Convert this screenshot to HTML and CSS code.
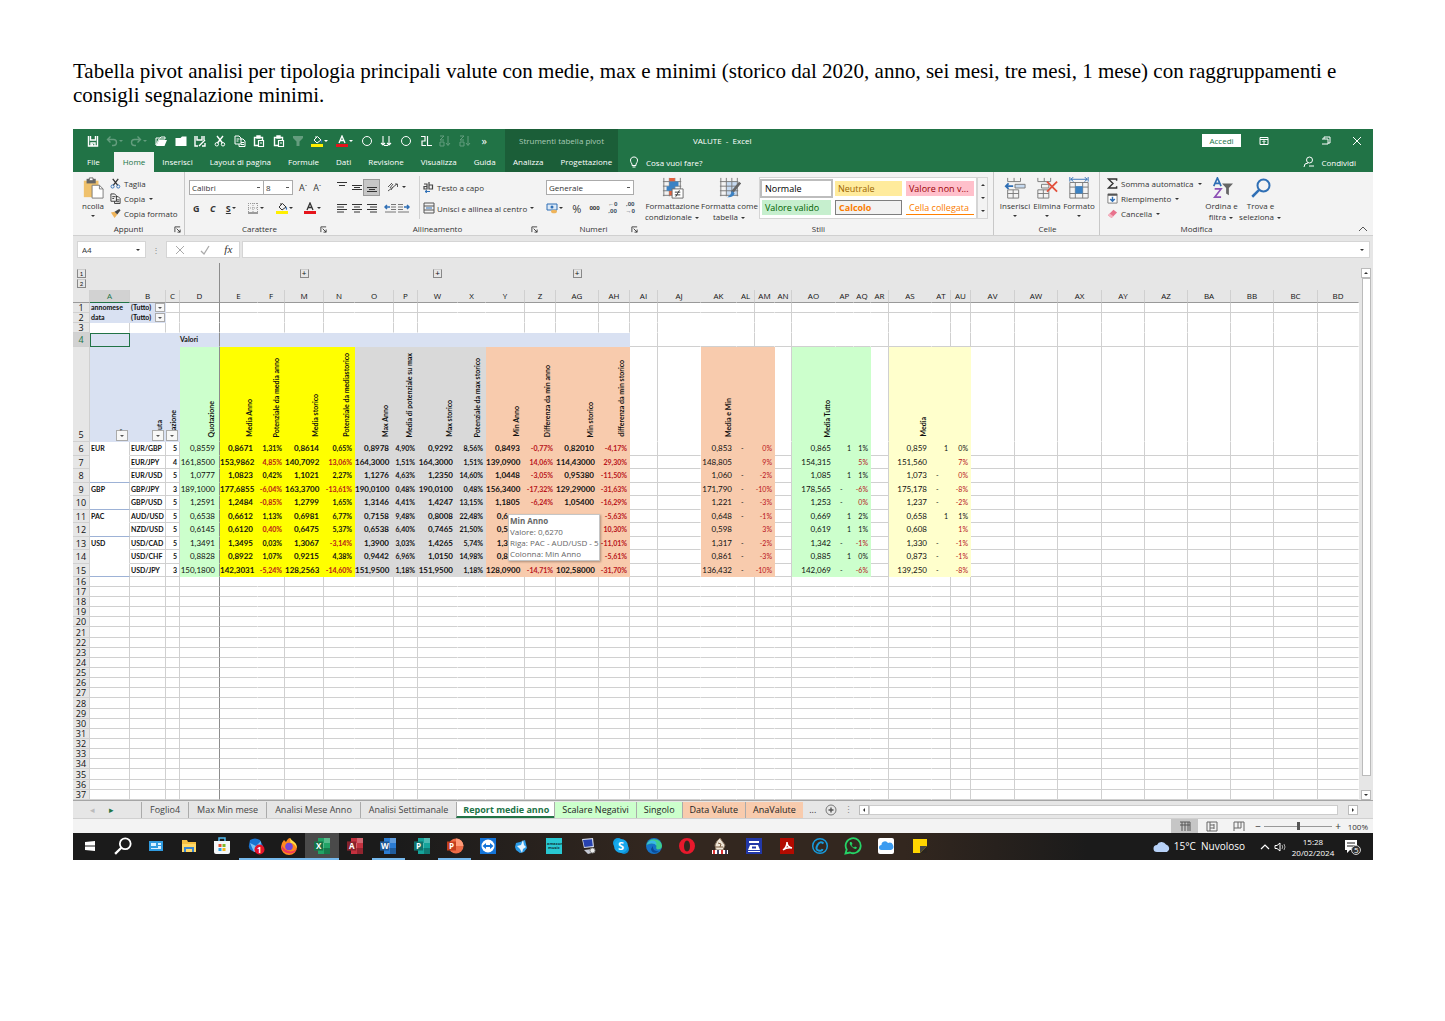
FILE: index.html
```html
<!DOCTYPE html>
<html lang="it">
<head>
    <meta charset="UTF-8">
    <meta name="viewport" content="width=device-width, initial-scale=1.0">
    <title>Tabella pivot valute</title>
    <link rel="stylesheet" href="styles.css">
</head>
<body>
    <!-- Shared icons -->
    <svg class="sprite" aria-hidden="true">
        <symbol id="save" viewBox="0 0 12 12"><path d="M1.5 1v10h9V1M3.5 1v4h5V1M4 11V8h4v3M5.5 9v2" fill="none" stroke="currentColor" stroke-width="1.4"/></symbol>
        <symbol id="undo" viewBox="0 0 12 12"><path d="M4.5 1.5L1.5 4.5l3 3M2 4.500h5.500a3 3 0 0 1 0 6H6" fill="none" stroke="currentColor" stroke-width="1.4"/></symbol>
        <symbol id="redo" viewBox="0 0 12 12"><path d="M7.500 1.500l3 3-3 3M10 4.500H4.500a3 3 0 0 0 0 6H6" fill="none" stroke="currentColor" stroke-width="1.400"/></symbol>
        <symbol id="open" viewBox="0 0 12 12"><path d="M1 10V3h4l1-1h4v2H4L1 10z" fill="none" stroke="currentColor"/><path d="M4 5h8l-2.500 6H1z" fill="currentColor"/></symbol>
        <symbol id="folder" viewBox="0 0 12 12"><path d="M0.500 3h5L7 1.500h4.500V11h-11z" fill="currentColor"/></symbol>
        <symbol id="cut" viewBox="0 0 12 12"><path d="M3 1l5.500 7M9 1L3.500 8" fill="none" stroke="currentColor" stroke-width="1.400"/><circle cx="2.800" cy="9.300" r="1.700" fill="none" class="loop"/><circle cx="9" cy="9.300" r="1.700" fill="none" class="loop"/></symbol>
        <symbol id="copy" viewBox="0 0 12 12"><path d="M1 1h4l2 2v6H1zM6 4h3l2 2v5.500H5V9M2.500 4h3M2.500 6h2M7 7.500h3M7 9.500h3" fill="none" stroke="currentColor"/></symbol>
        <symbol id="clip" viewBox="0 0 12 12"><path d="M5 10.500H1.500v-8h8V5M4 3V1h3v2z" fill="none" stroke="currentColor" stroke-width="1.400"/><path d="M5.500 5.500h5v6h-5zM7 8h2" fill="none" stroke="currentColor" stroke-width="1.200"/></symbol>
        <symbol id="funnel" viewBox="0 0 12 12"><path d="M1 1h10v2L7.500 6.500V11h-3V6.500L1 3z" fill="currentColor"/></symbol>
        <symbol id="fill" viewBox="0 0 12 12"><path d="M3 5l3.500-3.500L10 5 6 8zM5 3V1" fill="none" stroke="currentColor"/><path d="M10 4.500q2 2 .5 3.500-1.200-1-.5-3.500" fill="#2f6fb5"/><path d="M0 9h12v3H0z" fill="#ffef00"/></symbol>
        <symbol id="fontcolor" viewBox="0 0 12 12"><path d="M3 8l3-7 3 7M4 5.500h4" fill="none" stroke="currentColor" stroke-width="1.300"/><path d="M0 9h12v3H0z" fill="#e5141b"/></symbol>
        <symbol id="ring" viewBox="0 0 12 12"><circle cx="6" cy="6" r="4.500" fill="none" stroke="currentColor"/></symbol>
        <symbol id="downs" viewBox="0 0 12 12"><path d="M3 1v9M1 8l2 2 2-2M9 1v9M7 8l2 2 2-2M4 10.500h4" fill="none" stroke="currentColor" stroke-width="1.100"/></symbol>
        <symbol id="loops" viewBox="0 0 12 12"><path d="M1 1.500h4V6H2v4.500h4M7.500 1v9.500H12" fill="none" stroke="currentColor" stroke-width="1.200"/></symbol>
        <symbol id="sort" viewBox="0 0 12 12"><path d="M1 1h4L1 5h4M1 7h4v4H1zM9 1v9M7 8l2 2.500L11 8" fill="none" stroke="currentColor"/></symbol>
        <symbol id="lines" viewBox="0 0 12 12"><path d="M1 2.500h10M3 5h6M1 7.500h10M3 10h6" stroke="currentColor"/></symbol>
        <symbol id="left" viewBox="0 0 12 12"><path d="M1 2.500h10M1 5h7M1 7.500h10M1 10h7" stroke="currentColor"/></symbol>
        <symbol id="right" viewBox="0 0 12 12"><path d="M1 2.500h10M4 5h7M1 7.500h10M4 10h7" stroke="currentColor"/></symbol>
        <symbol id="vtop" viewBox="0 0 12 12"><path d="M1 1.500h10M3 4.500h6" stroke="currentColor"/></symbol>
        <symbol id="vmid" viewBox="0 0 12 12"><path d="M1 4.500h10M3 6.500h6M1 8.500h10" stroke="currentColor"/></symbol>
        <symbol id="vbot" viewBox="0 0 12 12"><path d="M3 8.500h6M1 10.500h10M1 6.500h10" stroke="currentColor"/></symbol>
        <symbol id="indent" viewBox="0 0 12 12"><path d="M7 2.500h5M7 5h5M7 7.500h5M1 10h11" stroke="#777"/><path d="M6 5H1M3 3L1 5l2 2" fill="none" stroke="#2f6fb5" stroke-width="1.500"/></symbol>
        <symbol id="borders" viewBox="0 0 12 12"><path d="M1.500 1v9M6 1v9M10.500 1v9M1 1.500h10M1 6h10" stroke="#999" stroke-dasharray="1 1"/><path d="M1 11h10" stroke="#444"/></symbol>
        <symbol id="grid" viewBox="0 0 24 24"><path d="M1 5h20M1 10h20M1 15h20M1 20h20M2 1v20M8 1v20M14 1v20M20 1v20" stroke="#777" fill="none"/></symbol>
        <symbol id="launch" viewBox="0 0 8 8"><path d="M1 7V1h6M3 3l4 4M7 4v3H4" fill="none" stroke="currentColor"/></symbol>
        <symbol id="lens" viewBox="0 0 16 16"><circle cx="10" cy="6" r="4.800" fill="none" stroke="currentColor" stroke-width="1.600"/><path d="M6.500 9.500L1 15" stroke="currentColor" stroke-width="2"/></symbol>
        <symbol id="office" viewBox="0 0 18 18"><path d="M5 1h12v16H5z" fill="currentColor"/><path d="M11 1h6v5h-6zM5 6h6v5H5z" fill="#fff" opacity=".25"/><path d="M11 11h6v6h-6z" opacity=".25"/><path d="M1 4.500h9v9H1z" fill="currentColor"/><path d="M1 4.500h9v9H1z" opacity=".3"/></symbol>
    </svg>

    <p class="intro">Tabella pivot analisi per tipologia principali valute con medie, max e minimi (storico dal 2020, anno, sei mesi, tre mesi, 1 mese) con raggruppamenti e consigli segnalazione minimi.</p>

    <main class="excel">
        <header class="top">
            <div class="top-left">
                <div class="quick">
                    <button aria-label="Salva"><svg><use href="#save"/></svg></button>
                    <button class="wide dim" aria-label="Annulla"><svg><use href="#undo"/></svg><i class="caret"></i></button>
                    <button class="wide dim" aria-label="Ripeti"><svg><use href="#redo"/></svg><i class="caret"></i></button>
                    <button aria-label="Apri"><svg><use href="#open"/></svg></button>
                    <button aria-label="Cartella"><svg><use href="#folder"/></svg></button>
                    <button aria-label="Salva con nome"><svg viewBox="0 0 12 12"><path d="M1 1v10h3M10 1v4M3 1v4h5V1M5 11l6-6M8 11h3V8" fill="none" stroke="currentColor" stroke-width="1.400"/></svg></button>
                    <button aria-label="Taglia"><svg><use href="#cut"/></svg></button>
                    <button aria-label="Copia"><svg><use href="#copy"/></svg></button>
                    <button aria-label="Incolla"><svg><use href="#clip"/></svg></button>
                    <button aria-label="Incolla valori"><svg><use href="#clip"/></svg></button>
                    <button class="dim" aria-label="Filtro"><svg><use href="#funnel"/></svg></button>
                    <button class="wide" aria-label="Riempimento"><svg><use href="#fill"/></svg><i class="caret"></i></button>
                    <button class="wide" aria-label="Colore carattere"><svg><use href="#fontcolor"/></svg><i class="caret"></i></button>
                    <button aria-label="Cerchio"><svg><use href="#ring"/></svg></button>
                    <button aria-label="Frecce"><svg><use href="#downs"/></svg></button>
                    <button aria-label="Aggiorna"><svg><use href="#ring"/></svg></button>
                    <button aria-label="Connessioni"><svg><use href="#loops"/></svg></button>
                    <button class="dim" aria-label="Ordina crescente"><svg><use href="#sort"/></svg></button>
                    <button class="dim" aria-label="Ordina decrescente"><svg><use href="#sort"/></svg></button>
                    <button class="others" aria-label="Altri comandi">»</button>
                </div>
                <nav class="tabs">
                    <a href="#" class="file">File</a>
                    <a href="#" class="active">Home</a>
                    <a href="#">Inserisci</a>
                    <a href="#">Layout di pagina</a>
                    <a href="#">Formule</a>
                    <a href="#">Dati</a>
                    <a href="#">Revisione</a>
                    <a href="#">Visualizza</a>
                    <a href="#">Guida</a>
                </nav>
            </div>
            <div class="top-context">
                <div class="context-title">Strumenti tabella pivot</div>
                <nav class="tabs"><a href="#">Analizza</a><a href="#">Progettazione</a></nav>
            </div>
            <div class="top-right">
                <div class="window-bar">
                    <span class="doc-title">VALUTE &nbsp;-&nbsp; Excel</span>
                    <button class="login">Accedi</button>
                    <button aria-label="Opzioni barra"><svg viewBox="0 0 12 12"><path d="M2 2.500h8v7H2zM2 4.500h8M6 9V6M4.500 7L6 5.500 7.500 7" fill="none" stroke="currentColor"/></svg></button>
                    <button class="restore" aria-label="Ripristina"><svg viewBox="0 0 12 12"><path d="M2 4h6v5H2M4 4V2h6v6H8" fill="none" stroke="currentColor"/></svg></button>
                    <button class="close" aria-label="Chiudi"><svg viewBox="0 0 12 12"><path d="M2 2l8 8M10 2l-8 8" stroke="currentColor"/></svg></button>
                </div>
                <div class="ask-bar">
                    <button><svg viewBox="0 0 12 12"><path d="M4 8C1 4 3 1 6 1s5 3 2 7v1.500H4zM4.500 11h3" fill="none" stroke="currentColor"/></svg> Cosa vuoi fare?</button>
                    <button><svg viewBox="0 0 12 12"><circle cx="6.500" cy="4" r="3" fill="none" stroke="currentColor"/><path d="M1 11q0-4 4-4M6 10h5" fill="none" stroke="currentColor"/></svg> Condividi</button>
                </div>
            </div>
        </header>

        <section class="ribbon">
            <div class="group clipboard line">
                <div class="body">
                    <button class="big">
                        <svg viewBox="0 0 24 24"><path d="M2 4h16v18H2z" fill="#efc16c"/><path d="M5 2h10v5H5z" fill="#666"/><path d="M8 1h4v3H8z" fill="#fff" stroke="#666"/><path d="M11 9h8l4 4v10H11z" fill="#fff" stroke="#777"/><path d="M19 9v4h4" fill="none" stroke="#777"/></svg>
                        ncolla<i class="caret"></i>
                    </button>
                    <div class="stack">
                        <button><svg><use href="#cut"/></svg>Taglia</button>
                        <button><svg><use href="#copy"/></svg>Copia <i class="caret"></i></button>
                        <button><svg viewBox="0 0 12 12"><path d="M1 5l4-1 3 3-3 4z" fill="#efb45a"/><path d="M5 4l5-3 1.500 1.500L8 7z" fill="#444"/></svg>Copia formato</button>
                    </div>
                </div>
                <div class="caption">Appunti<svg><use href="#launch"/></svg></div>
            </div>

            <div class="group font">
                <div class="body rows">
                    <div class="row">
                        <select class="family" aria-label="Carattere"><option>Calibri</option></select><select class="size" aria-label="Dimensione"><option>8</option></select>
                        <button class="letter">A<sup>ˆ</sup></button>
                        <button class="letter">A<sup>ˇ</sup></button>
                    </div>
                    <div class="row spread">
                        <button class="letter"><b>G</b></button>
                        <button class="letter"><b><em>C</em></b></button>
                        <button class="letter"><b><u>S</u></b> <i class="caret"></i></button>
                        <button><svg><use href="#borders"/></svg><i class="caret"></i></button>
                        <button><svg><use href="#fill"/></svg><i class="caret"></i></button>
                        <button><svg><use href="#fontcolor"/></svg><i class="caret"></i></button>
                    </div>
                </div>
                <div class="caption">Carattere<svg><use href="#launch"/></svg></div>
            </div>

            <div class="group align">
                <div class="body rows">
                    <div class="row">
                        <button class="tool" aria-label="In alto"><svg><use href="#vtop"/></svg></button>
                        <button class="tool" aria-label="Al centro"><svg><use href="#vmid"/></svg></button>
                        <button class="tool on" aria-label="In basso"><svg><use href="#vbot"/></svg></button>
                        <button class="tool wide-tool" aria-label="Orientamento"><svg viewBox="0 0 12 12"><path d="M1 10l9-7M8 3h2.500v3M1 6l4-4M3 7l3-4M4 9l2-3" fill="none" stroke="#555"/></svg><i class="caret"></i></button>
                        <button class="split"><svg viewBox="0 0 12 12"><path d="M1 3h3v5H1V5.500h3M6 1v7h3.500V4H6" fill="none" stroke="#444" stroke-width="1.200"/><path d="M2 10.500h5M4 9l-2 1.500L4 12" fill="none" stroke="#2f6fb5"/></svg>Testo a capo</button>
                    </div>
                    <div class="row">
                        <button class="tool" aria-label="A sinistra"><svg><use href="#left"/></svg></button>
                        <button class="tool" aria-label="Centra"><svg><use href="#lines"/></svg></button>
                        <button class="tool" aria-label="A destra"><svg><use href="#right"/></svg></button>
                        <button class="tool wide-tool" aria-label="Rientro"><svg><use href="#indent"/></svg><svg class="flip"><use href="#indent"/></svg></button>
                        <button class="split"><svg viewBox="0 0 12 12"><path d="M1 1h10v10H1zM1 4h10M1 8h10" fill="none" stroke="#555"/><path d="M3 6h6" stroke="#2f6fb5"/></svg>Unisci e allinea al centro <i class="caret"></i></button>
                    </div>
                </div>
                <div class="caption">Allineamento<svg><use href="#launch"/></svg></div>
            </div>

            <div class="group number">
                <div class="body rows">
                    <div class="row"><select class="format" aria-label="Formato numero"><option>Generale</option></select></div>
                    <div class="row spread">
                        <button aria-label="Valuta"><svg viewBox="0 0 12 12"><path d="M1 2h10v6H1z" fill="#dce9f6" stroke="#2f6fb5"/><circle cx="6" cy="5" r="1.500" fill="#2f6fb5"/><ellipse cx="8" cy="9.500" rx="3" ry="1.800" fill="#efb45a"/></svg><i class="caret"></i></button>
                        <button class="percent">%</button>
                        <button class="zeros">000</button>
                        <button class="dec">←0<br>,00</button>
                        <button class="dec">,00<br>→0</button>
                    </div>
                </div>
                <div class="caption">Numeri<svg><use href="#launch"/></svg></div>
            </div>

            <div class="group styles line">
                <div class="body">
                    <button class="big"><svg viewBox="0 0 24 24"><use href="#grid"/><path d="M8 1h6v4H8zM8 15h6v5H8z" fill="#e2603c"/><path d="M8 5h10v5H8zM5 10h9v5H5z" fill="#3b82c4"/><path d="M11 13h12v10H11z" fill="#fff" stroke="#666"/><path d="M14 16.500h6M14 19.500h6M19 14.500l-4 7" stroke="#333"/></svg>Formattazione<span>condizionale <i class="caret"></i></span></button>
                    <button class="big"><svg viewBox="0 0 24 24"><path d="M8 5h12v15H8z" fill="#c6daf0"/><use href="#grid"/><path d="M23 6l-9 11" stroke="#666" stroke-width="3"/><path d="M14 15l3 3q-2 5-8 4 4-2 5-7" fill="#3b82c4"/></svg>Formatta come<span>tabella <i class="caret"></i></span></button>
                    <div class="gallery">
                        <button class="normal">Normale</button>
                        <button class="neutral">Neutrale</button>
                        <button class="bad">Valore non v...</button>
                        <button class="good">Valore valido</button>
                        <button class="calc">Calcolo</button>
                        <button class="linked">Cella collegata</button>
                    </div>
                    <div class="gallery-nav"><i class="caret up"></i><i class="caret"></i><i class="caret"></i></div>
                </div>
                <div class="caption">Stili</div>
            </div>

            <div class="group cells line">
                <div class="body">
                    <button class="big"><svg viewBox="0 0 24 24"><path d="M4 1v4h14V1M11 1v4M4 14h12v9H4zM10 14v9M4 18h12" fill="none" stroke="#777"/><path d="M12 8h11v4H12z" fill="#c6daf0" stroke="#777"/><path d="M10 10H2M5 7l-3 3 3 3" fill="none" stroke="#2f6fb5" stroke-width="2"/></svg>Inserisci<i class="caret"></i></button>
                    <button class="big"><svg viewBox="0 0 24 24"><path d="M2 1v4h14V1M9 1v4M2 14h12v9H2zM8 14v9M2 18h12M6 8h8v4H6z" fill="none" stroke="#777"/><path d="M12 5l11 11M23 5L12 16" stroke="#e2503c" stroke-width="2"/></svg>Elimina<i class="caret"></i></button>
                    <button class="big"><svg viewBox="0 0 24 24"><path d="M2 6h20v17H2zM8 6v17M16 6v17M2 11h20M2 18h20" fill="none" stroke="#777"/><path d="M8 10h8v8H8z" fill="#3b82c4"/><path d="M2 0v5M22 0v5M3 2.500h18M6 0L3 2.500 6 5M18 0l3 2.500L18 5" fill="none" stroke="#2f6fb5"/></svg>Formato<i class="caret"></i></button>
                </div>
                <div class="caption">Celle</div>
            </div>

            <div class="group edit">
                <div class="body">
                    <div class="stack">
                        <button><svg viewBox="0 0 12 12"><path d="M10.500 3V1h-9l5 5-5 5h9V9" fill="none" stroke="#333" stroke-width="1.600"/></svg>Somma automatica <i class="caret"></i></button>
                        <button><svg viewBox="0 0 12 12"><path d="M1 1h10v10H1z" fill="#fff" stroke="#777"/><path d="M1 2h10" stroke="#555" stroke-width="2"/><path d="M6 4v5M3.500 6.500L6 9l2.500-2.500" fill="none" stroke="#2f6fb5" stroke-width="1.600"/></svg>Riempimento <i class="caret"></i></button>
                        <button><svg viewBox="0 0 12 12"><path d="M1 8l6-6 4 3-6 6z" fill="#e8728c"/><path d="M1 8l2-2 4 3-2 2z" fill="#f5b3c0"/></svg>Cancella <i class="caret"></i></button>
                    </div>
                    <button class="big"><svg viewBox="0 0 24 24"><path d="M3 10L7 1l4 9M4.500 7h5" fill="none" stroke="#2f6fb5" stroke-width="1.800"/><path d="M4 13h7l-7 9h7" fill="none" stroke="#8d4fb5" stroke-width="1.800"/><path d="M12 7h12l-4.500 5v8l-3-2v-6z" fill="#666"/></svg>Ordina e<span>filtra <i class="caret"></i></span></button>
                    <button class="big find"><svg><use href="#lens"/></svg>Trova e<span>seleziona <i class="caret"></i></span></button>
                </div>
                <div class="caption">Modifica</div>
            </div>
            <button class="collapse" aria-label="Comprimi"><svg viewBox="0 0 12 12"><path d="M2 8l4-4 4 4" fill="none" stroke="#555"/></svg></button>
        </section>

        <section class="formula">
            <div class="name"><input type="text" value="A4" aria-label="Casella nome"><i class="caret"></i></div>
            <span class="dots">⋮</span>
            <div class="fx">
                <svg viewBox="0 0 12 12"><path d="M2 2l8 8M10 2l-8 8" stroke="#aaa"/></svg>
                <svg viewBox="0 0 12 12"><path d="M2 7l3 3 5-8" fill="none" stroke="#aaa" stroke-width="1.300"/></svg>
                <em>fx</em>
            </div>
            <div class="entry"><input type="text" aria-label="Barra della formula"><i class="caret"></i></div>
        </section>

        <section class="sheet">
            <div class="sheet-view">
                <table id="grid-table"></table>
                <div class="tip"><b>Min Anno</b><br>Valore: 0,6270<br>Riga: PAC - AUD/USD - 5<br>Colonna: Min Anno</div>
            </div>
            <div class="vscroll">
                <button aria-label="Su"><i class="caret up"></i></button>
                <div class="thumb"></div>
                <button aria-label="Giù"><i class="caret"></i></button>
            </div>
        </section>

        <nav class="sheets">
            <div class="arrows"><span>◂</span><span class="next">▸</span></div>
            <a href="#">Foglio4</a>
            <a href="#">Max Min mese</a>
            <a href="#">Analisi Mese Anno</a>
            <a href="#">Analisi Settimanale</a>
            <a href="#" class="current">Report medie anno</a>
            <a href="#" class="green">Scalare Negativi</a>
            <a href="#" class="green">Singolo</a>
            <a href="#" class="orange">Data Valute</a>
            <a href="#" class="orange">AnaValute</a>
            <span class="more">...</span>
            <button class="add" aria-label="Nuovo foglio"><svg viewBox="0 0 12 12"><circle cx="6" cy="6" r="5" fill="none" stroke="#777"/><path d="M6 3.500v5M3.500 6h5" stroke="#555" stroke-width="1.400"/></svg></button>
            <span class="dots">⋮</span>
            <div class="hscroll"><button aria-label="Sinistra"><i class="caret west"></i></button><div class="thumb"></div><button aria-label="Destra"><i class="caret east"></i></button></div>
        </nav>

        <footer class="status">
            <button class="on" aria-label="Normale"><svg viewBox="0 0 12 12"><path d="M1 2h10M1 5h10M3 2v9M6 2v9M9 2v9M11 2v9" stroke="#555" fill="none"/></svg></button>
            <button aria-label="Layout di pagina"><svg viewBox="0 0 12 12"><path d="M1 2h10v9H1zM4 2v9M4 5h4M4 8h4M8 4v5" fill="none" stroke="#666"/></svg></button>
            <button aria-label="Anteprima interruzioni"><svg viewBox="0 0 12 12"><path d="M1 11V2h10v9M5 2v6H1M8 2v6H5" fill="none" stroke="#666"/></svg></button>
            <span>−</span>
            <input type="range" min="10" max="190" value="100" aria-label="Zoom">
            <span>+</span>
            <span class="zoom">100%</span>
        </footer>

        <div class="taskbar">
            <div class="apps">
                <a href="#" aria-label="Start"><svg viewBox="0 0 18 18"><path d="M4 5l10-1v10L4 13z" fill="#fff"/><path d="M4 9h10" stroke="#1c1c1c"/></svg></a>
                <a href="#" aria-label="Cerca" class="search"><svg><use href="#lens"/></svg></a>
                <a href="#" aria-label="Desktop"><svg viewBox="0 0 18 18"><path d="M2 4h14v10H2z" fill="#2f9be0"/><path d="M4 6h5v3H4zM11 6h3v2h-3zM11 9h3v2h-3zM4 11h10v1H4z" fill="#d8f0ff"/></svg></a>
                <a href="#" aria-label="Esplora file"><svg viewBox="0 0 18 18"><path d="M2 3h5l1 2h8v10H2z" fill="#f5c042"/><path d="M2 7h14v8H2z" fill="#ffd968"/><path d="M4 10h10v5h-2v-3H6v3H4z" fill="#3a86d0"/></svg></a>
                <a href="#" aria-label="Store"><svg viewBox="0 0 18 18"><path d="M6 4V1h6v3" fill="none" stroke="#4fb9ee" stroke-width="1.500"/><path d="M1 4h16v11q0 2-2 2H3q-2 0-2-2z" fill="#f4f8fa"/><path d="M5.500 7h3v3h-3z" fill="#e5502e"/><path d="M9.500 7h3v3h-3z" fill="#7db928"/><path d="M5.500 11h3v3h-3z" fill="#2ea3e5"/><path d="M9.500 11h3v3h-3z" fill="#f5b81e"/></svg></a>
                <a href="#" aria-label="Posta" class="run"><svg viewBox="0 0 18 18"><path d="M3 3q5-3 10 0l3 6q-2 6-8 6Q1 13 2 8z" fill="#1a73d0"/><path d="M3 6l6 3 5-5-1 9-6 2z" fill="#7cc4f5"/><circle cx="12.500" cy="12.500" r="5" fill="#e5142a"/><text x="10" y="15.500">1</text></svg></a>
                <a href="#" aria-label="Firefox" class="run"><svg viewBox="0 0 18 18"><path d="M2 6l2-3 2 2q2-4 4-4 1 2 4 4 3 2 3 5a7.500 7.500 0 0 1-16 0z" fill="#ff8a1c"/><path d="M10 1q1 2 4 4 3 2 2.500 6-2-5-6-5z" fill="#ffdf45"/><path d="M1.500 8q0 8 8 8.500 6 0 7-5-2 3-6 3-6-1-9-6.500" fill="#f2385c"/><circle cx="9" cy="9.500" r="3.800" fill="#7547d8"/></svg></a>
                <a href="#" aria-label="Excel" class="run now"><svg class="xl"><use href="#office"/><text x="3" y="12">X</text></svg></a>
                <a href="#" aria-label="Access"><svg class="ac"><use href="#office"/><text x="3" y="12">A</text></svg></a>
                <a href="#" aria-label="Word" class="run"><svg class="wd"><use href="#office"/><text x="2" y="12">W</text></svg></a>
                <a href="#" aria-label="Publisher"><svg class="pb"><use href="#office"/><text x="3" y="12">P</text></svg></a>
                <a href="#" aria-label="PowerPoint" class="run"><svg class="pp" viewBox="0 0 18 18"><circle cx="10" cy="9" r="7.500" fill="currentColor"/><path d="M10 1.500v7.500h7.500A7.500 7.500 0 0 0 10 1.500" fill="#ff9b78"/><path d="M1 4.500h9v9H1z" fill="#c43e1c"/><text x="3" y="12">P</text></svg></a>
                <a href="#" aria-label="TeamViewer"><svg viewBox="0 0 18 18"><path d="M1 1h16v16H1z" fill="#1474d8"/><circle cx="9" cy="9" r="6.500" fill="#fff"/><path d="M3.500 9L7 6v2h4V6l3.500 3L11 12v-2H7v2z" fill="#1474d8"/></svg></a>
                <a href="#" aria-label="Sincronizza"><svg viewBox="0 0 18 18"><path d="M4 6l4-1 5-2 1 4 1 4-3 4-4 1-4-3-1-3z" fill="#2b9be8"/><path d="M5 9l4-1 2-5 1 5 2 2-3 2-1 4-2-4z" fill="#e4f4ff"/></svg></a>
                <a href="#" aria-label="Amazon Music"><svg viewBox="0 0 18 18"><path d="M1 1h16v16H1z" fill="#29c8d2"/><text x="2" y="8" class="tiny">amazon</text><text x="3" y="12" class="tiny">music</text></svg></a>
                <a href="#" aria-label="Computer remoto"><svg viewBox="0 0 18 18"><path d="M3 2l11-1 1 9-10 1z" fill="#d5dcec"/><path d="M4 3l9-.8.8 6.800L5.500 10z" fill="#2742b0"/><path d="M5 13l8-1 3 3-7 2z" fill="#c5c9d4"/><circle cx="13.500" cy="13.500" r="2.500" fill="#eee" stroke="#888"/></svg></a>
                <a href="#" aria-label="Skype"><svg viewBox="0 0 18 18"><circle cx="6" cy="6" r="5" fill="#0d9fe0"/><circle cx="12" cy="12" r="5" fill="#0d8bd0"/><circle cx="9" cy="9" r="7" fill="#17a8ec"/><text x="6" y="13" class="s">S</text></svg></a>
                <a href="#" aria-label="Edge"><svg viewBox="0 0 18 18"><circle cx="9" cy="9" r="8" fill="#1673c8"/><path d="M1.500 8A8 8 0 0 1 17 8.500q0 4-4.500 4-2-1-1-3.500Q9 4 1.500 8" fill="#3fce8c"/><path d="M2 7q3-5 8-3 2 2 1.500 4Q8 5 2 7" fill="#39b8e8"/><path d="M8 9q-1 5 6 5.500Q7 18 6 12z" fill="#0b4a96"/></svg></a>
                <a href="#" aria-label="Opera"><svg viewBox="0 0 18 18"><path fill-rule="evenodd" d="M9 1a8 8 0 1 0 0 16A8 8 0 0 0 9 1zm0 2.500c2 0 3 2.500 3 5.500s-1 5.500-3 5.500S6 12 6 9s1-5.500 3-5.500z" fill="#e8192c"/></svg></a>
                <a href="#" aria-label="Scacchi"><svg viewBox="0 0 18 18"><path d="M6 4l3-3 2 3 3 4-2 5H5l-1-5z" fill="#f0e6d8" stroke="#8b7560"/><path d="M7 6l3 1-1 3M5 10h7" fill="none" stroke="#7a5c40"/><path d="M1 13h16v4H1z" fill="#fff"/><path d="M3 13v4M11 13v4" stroke="#d33" stroke-width="2"/><path d="M7 13v4M15 13v4" stroke="#446" stroke-width="2"/></svg></a>
                <a href="#" aria-label="Scanner"><svg viewBox="0 0 18 18"><path d="M1 1h16v16H1z" fill="#2238a8"/><path d="M4 4h10v2H4zM5 8h8l2 5H3zM3 14h12v1H3z" fill="#fff"/><path d="M7 9.500h4v2H7z" fill="#2238a8"/></svg></a>
                <a href="#" aria-label="Acrobat"><svg viewBox="0 0 18 18"><path d="M2 1h14v16H2z" fill="#b30b00"/><path d="M5 13q4-3 4-8 0 5 5 6-5-1-9 2" fill="none" stroke="#fff" stroke-width="1.500"/></svg></a>
                <a href="#" aria-label="Cashback"><svg viewBox="0 0 18 18"><circle cx="9" cy="9" r="7.300" fill="none" stroke="#189bdc" stroke-width="1.500"/><path d="M12.500 6.500Q9 3.500 6.500 8t1 5.500 4-1.500" fill="none" stroke="#189bdc" stroke-width="2"/></svg></a>
                <a href="#" aria-label="WhatsApp"><svg viewBox="0 0 18 18"><path d="M1.500 16.500l1.200-4A7.500 7.500 0 1 1 6 15.500z" fill="none" stroke="#25d366" stroke-width="1.800"/><path d="M6 5q-1 2 1.500 4.500T12 12l1-1.500-2-1-1 1Q8 9.500 7.500 8l1-1-1-2z" fill="#25d366"/></svg></a>
                <a href="#" aria-label="iCloud"><svg viewBox="0 0 18 18"><rect x="1" y="1" width="16" height="16" rx="2" fill="#fff"/><path d="M4.500 13a2.500 2.500 0 0 1 0-5 3.500 3.500 0 0 1 6.500-2 3.500 3.500 0 0 1 3 7z" fill="#3b9bf0"/></svg></a>
                <a href="#" aria-label="Note"><svg viewBox="0 0 18 18"><path d="M2 2h14v14H2z" fill="#ffd500"/><path d="M9 9h7l-7 7z" fill="#444"/><path d="M16 9v7H9z" fill="#2b241f"/></svg></a>
            </div>
            <div class="tray">
                <svg class="cloud" viewBox="0 0 18 12"><path d="M4 11a3.500 3.500 0 0 1 0-7 5 5 0 0 1 9-.5A4 4 0 0 1 14 11z" fill="#b8d2f8"/></svg>
                <span class="weather">15°C&nbsp; Nuvoloso</span>
                <svg viewBox="0 0 12 12"><path d="M2 8l4-4 4 4" fill="none" stroke="#fff" stroke-width="1.200"/></svg>
                <svg viewBox="0 0 12 12"><path d="M1 4.500h2L6 2v8L3 7.500H1z" fill="none" stroke="#fff"/><path d="M8 4q1.500 2 0 4M10 3q2 3 0 6" fill="none" stroke="#aaa"/></svg>
                <time>15:28<br>20/02/2024</time>
                <svg class="bell" viewBox="0 0 18 18"><path d="M1 2h12v10H6l-3 3v-3H1z" fill="#fff"/><path d="M3 5h8M3 8h8" stroke="#1c1c1c"/><circle cx="12" cy="12" r="4.500" fill="#333" stroke="#ccc"/><text x="10" y="15" font-size="8" fill="#fff">5</text></svg>
            </div>
        </div>
    </main>
    <script src="script.js"></script>
</body>
</html>
```

FILE: styles.css
```css
body {
    margin: 0;
    padding: 59px 72px 0 73px;
    background: #fff;
    color: #000;
    font-family: "Liberation Serif", serif;
}

.sprite {
    display: none;
}

.intro {
    margin: 0 0 22px;
    font-size: 21px;
    line-height: 24px;
}

.excel {
    --loop: #2f6fb5;
    font-family: "Open Sans", sans-serif;
    font-size: 8px;
    line-height: 11px;
    color: #333;
    background: #e6e6e6;
}

a {
    color: inherit;
    text-decoration: none;
}

button, input, select {
    font: inherit;
    color: inherit;
    background: none;
    border: 0;
    border-radius: 0;
    margin: 0;
    padding: 0;
    box-sizing: border-box;
    appearance: none;
}

button {
    display: flex;
    align-items: center;
    justify-content: center;
    white-space: nowrap;
}

svg {
    width: 12px;
    height: 12px;
    flex: none;
}

.loop {
    stroke: var(--loop);
}

.caret {
    display: inline-block;
    border: 2px solid transparent;
    border-top-color: currentColor;
    border-bottom: 0;
    margin: 1px;
    vertical-align: middle;
}

.caret.up {
    transform: rotate(180deg);
}

.caret.west {
    transform: rotate(90deg);
}

.caret.east {
    transform: rotate(270deg);
}

/* Title bar and tabs */
.top {
    --loop: #fff;
    display: flex;
    background: #217346;
    color: #fff;
}

.top-left {
    width: 432px;
}

.top-context {
    width: 113px;
    background: #1b5e38;
}

.top-right {
    flex: 1;
}

.quick {
    display: flex;
    height: 23px;
    padding: 0 11px 0 10px;
}

.quick button {
    flex: 4 0 0;
}

.quick .wide {
    flex-grow: 5;
}

.quick .others {
    font-size: 11px;
}

.dim {
    opacity: 0.3;
}

.tabs {
    display: flex;
    height: 20px;
    line-height: 20px;
}

.tabs a {
    padding: 0 9px 0 8px;
    white-space: nowrap;
}

.tabs .file {
    padding: 0 14px;
}

.tabs .active {
    background: #f3f3f3;
    color: #217346;
    padding: 0 9px;
}

.context-title {
    height: 23px;
    line-height: 23px;
    text-align: center;
    color: #a9c9b6;
}

.window-bar {
    display: flex;
    align-items: center;
    height: 23px;
    padding-right: 10px;
}

.doc-title {
    flex: 1;
    padding-left: 75px;
}

.login {
    width: 39px;
    height: 13px;
    background: #fff;
    color: #217346;
    margin-right: 17px;
}

.window-bar .restore {
    margin-left: 50px;
}

.window-bar .close {
    margin-left: 19px;
}

.ask-bar {
    display: flex;
    justify-content: space-between;
    height: 20px;
    padding: 0 17px 0 10px;
}

.ask-bar button {
    gap: 6px;
}

/* Ribbon */
.ribbon {
    display: flex;
    height: 63px;
    background: #f3f3f3;
    border-bottom: 1px solid #d0d0d0;
    position: relative;
}

.group {
    display: flex;
    flex-direction: column;
    box-sizing: border-box;
    padding-top: 5px;
    flex: none;
}

.line {
    border-right: 1px solid #c8c8c8;
}

.body {
    display: flex;
    height: 46px;
}

.caption {
    display: flex;
    justify-content: center;
    position: relative;
    line-height: 12px;
}

.caption svg {
    position: absolute;
    right: 3px;
    top: 3px;
    width: 7px;
    height: 7px;
}

.big {
    flex-direction: column;
    justify-content: flex-start;
    line-height: 11px;
}

.big svg {
    width: 22px;
    height: 22px;
    margin-bottom: 1px;
}

.big > .caret {
    margin-top: 4px;
}

.stack {
    display: flex;
    flex-direction: column;
    justify-content: space-between;
    height: 43px;
}

.stack button {
    gap: 3px;
    height: 13px;
    justify-content: flex-start;
}

.stack svg {
    width: 11px;
    height: 11px;
}

.rows {
    flex-direction: column;
    gap: 5px;
    padding-top: 2px;
    box-sizing: border-box;
}

.row {
    display: flex;
    align-items: center;
    height: 16px;
}

.spread {
    justify-content: space-between;
}

.letter {
    font-size: 9px;
}

.letter sup {
    font-size: 6px;
    line-height: 6px;
}

.clipboard {
    width: 112px;
}

.clipboard .body {
    gap: 5px;
}

.clipboard .big {
    width: 32px;
    padding-left: 8px;
}

.font {
    width: 145px;
    padding-left: 4px;
}

.font .row {
    gap: 6px;
}

.font .spread {
    padding: 0 8px 0 4px;
}

select {
    height: 15px;
    background: #fff;
    border: 1px solid #ababab;
    padding-left: 2px;
    background-image: linear-gradient(#555, #555);
    background-size: 3px 1px;
    background-repeat: no-repeat;
    background-position: right 3px center;
}

.family {
    width: 75px;
}

.size {
    width: 30px;
    margin-left: -7px;
}

.align {
    width: 211px;
    padding-left: 4px;
}

.tool {
    width: 15px;
    height: 15px;
}

.wide-tool {
    width: 36px;
    gap: 2px;
}

.tool.on {
    background: #c6c6c6;
    outline: 1px solid #999;
}

.flip {
    transform: scaleX(-1);
}

.split {
    gap: 2px;
    height: 22px;
    border-left: 1px solid #d0d0d0;
    padding-left: 3px;
    margin-left: 4px;
}

.number {
    width: 100px;
    padding-left: 5px;
}

.format {
    width: 88px;
}

.number .spread {
    padding-right: 6px;
}

.percent {
    font-size: 11px;
}

.zeros {
    font-size: 6px;
    font-weight: 700;
}

.dec {
    font-size: 6px;
    line-height: 7px;
    font-weight: 700;
    color: #456;
}

.styles {
    width: 353px;
    padding-left: 3px;
}

.styles .big {
    width: 57px;
}

.gallery {
    display: grid;
    grid-template-columns: 69px 67px 68px;
    grid-template-rows: 15px 15px;
    gap: 4px;
    padding: 3px 2px;
    height: 34px;
    background: #fff;
    border: 1px solid #d5d5d5;
    margin-left: 1px;
}

.gallery button {
    justify-content: flex-start;
    padding-left: 3px;
    font-size: 9px;
    overflow: hidden;
}

.normal {
    outline: 2px solid #bdbdbd;
    color: #000;
}

.neutral {
    background: #ffeb9c;
    color: #9c6500;
}

.bad {
    background: #ffc0cb;
    color: #9c0006;
}

.good {
    background: #c6efce;
    color: #006100;
}

.gallery .calc {
    background: #f2f2f2;
    border: 1px solid #7f7f7f;
    color: #fa7d00;
    font-weight: 700;
}

.gallery .linked {
    color: #fa7d00;
    border-bottom: 1px solid #ff8001;
}

.gallery-nav {
    display: flex;
    flex-direction: column;
    justify-content: space-around;
    align-items: center;
    width: 9px;
    height: 40px;
    border: 1px solid #d5d5d5;
}

.cells {
    width: 106px;
    padding-left: 2px;
}

.cells .body {
    padding-left: 3px;
}

.cells .big {
    width: 32px;
}

.edit {
    width: 186px;
    padding-left: 7px;
}

.edit .stack {
    width: 95px;
}

.edit .big {
    width: 39px;
    flex: none;
}

.find svg {
    color: #2f6fb5;
    width: 20px;
}

.collapse {
    position: absolute;
    right: 4px;
    bottom: 0;
}

/* Formula bar */
.formula {
    display: flex;
    height: 27px;
    align-items: center;
    padding: 0 3px 0 4px;
}

.name, .entry, .fx {
    display: flex;
    align-items: center;
    height: 17px;
    box-sizing: border-box;
    background: #fff;
    border: 1px solid #d5d5d5;
}

.name {
    width: 69px;
    padding: 0 4px;
}

.name input, .entry input {
    flex: 1;
    min-width: 0;
}

.dots {
    width: 20px;
    text-align: center;
    color: #888;
}

.fx {
    width: 74px;
    justify-content: space-around;
    margin-right: 2px;
    font-family: "Liberation Serif", serif;
    font-size: 11px;
}

.entry {
    flex: 1;
    padding: 0 4px;
}

/* Worksheet */
.sheet {
    display: flex;
}

.sheet-view {
    flex: 1;
    position: relative;
    min-width: 0;
}

table {
    width: 100%;
    table-layout: fixed;
    border-collapse: separate;
    border-spacing: 0;
    background: #fff;
    font-family: Lato, sans-serif;
    color: #111;
}

th, td {
    box-sizing: border-box;
    padding: 0;
    height: 10px;
    line-height: 9px;
    white-space: nowrap;
    font-weight: 400;
    border-right: 1px solid #d0d0d0;
    border-bottom: 1px solid #d0d0d0;
}

.bare {
    border-right-color: transparent;
}

.outline th {
    height: 27px;
    padding-top: 6px;
    background: #e6e6e6;
    border-bottom: 0;
    border-right-color: #e6e6e6;
    vertical-align: top;
}

.outline button {
    width: 9px;
    height: 9px;
    margin: 0 auto;
    border: 1px solid #888;
    border-top-color: #ccc;
    line-height: 7px;
}

.outline .levels button {
    margin: 0 0 1px 4px;
    font-size: 6px;
}

.letters th {
    height: 13px;
    background: #e6e6e6;
    line-height: 12px;
    font-family: "Open Sans", sans-serif;
    border-bottom-color: #999;
}

.letters .bare {
    border-right-color: #e6e6e6;
}

.outline .freeze, .letters .freeze {
    border-right-color: #8c8c8c;
}

.letters .picked {
    background: #d2d2d2;
    color: #217346;
    border-bottom-color: #217346;
}

tbody th {
    background: #e6e6e6;
    font-family: "Open Sans", sans-serif;
    font-size: 9px;
    vertical-align: bottom;
}

tbody .picked {
    background: #d2d2d2;
    color: #217346;
}

.empty:nth-child(7n) th, .empty:nth-child(7n) td {
    height: 11px;
}

.plain td {
    border-bottom-color: transparent;
}

.title td, .title th {
    height: 14px;
    vertical-align: middle;
}

.title td {
    font-weight: 700;
    font-size: 7px;
}

.names td {
    height: 95px;
    border-bottom-color: transparent;
    vertical-align: bottom;
    padding: 0 3px 4px 0;
}

.names th {
    padding-bottom: 2px;
}

.names span {
    display: block;
    margin-left: auto;
    writing-mode: vertical-rl;
    transform: rotate(180deg);
    font-size: 7px;
    line-height: 10px;
    font-weight: 700;
}

.names .pivot {
    padding: 0 1px 0 0;
}

.pivot button, .filter button {
    width: 12px;
    height: 11px;
    margin-left: auto;
    background: #f7f7f7;
    border: 1px solid #aaa;
    color: #555;
}

.filter {
    font-size: 7px;
    font-weight: 700;
    padding-left: 1px;
}

.filter div {
    display: flex;
}

.filter button {
    height: 9px;
    width: 10px;
}

.rate td, .rate th {
    height: 14px;
    vertical-align: middle;
}

.rate:nth-child(odd) td, .rate:nth-child(odd) th {
    height: 13px;
}

.rate td {
    font-size: 7px;
    font-weight: 700;
    text-align: right;
    padding-right: 2px;
}

.rate .price {
    font-size: 8px;
    padding-right: 4px;
}

.rate .thin {
    font-weight: 400;
}

/* Minimum values that run under the tooltip */
.rate .partial {
    padding-right: 16px;
}

.rate .text {
    text-align: left;
    padding-left: 1px;
}

.rate .group-name {
    border-bottom-color: transparent;
}

.rate .group-end {
    border-bottom-color: #9db2d6;
}

.rate .dash {
    text-align: left;
    padding-left: 4px;
}

.rate .red {
    color: #b8141a;
}

td.lilac, td.mint, td.yellow, td.gray, td.peach, td.cream {
    border-color: transparent;
}

.lilac { background: #d9e1f2; }
.mint { background: #ccffcc; }
.yellow { background: #ffff00; }
.gray { background: #d9d9d9; }
.peach { background: #f8cbad; }
.cream { background: #ffffcc; }

td.freeze {
    border-right-color: #8c8c8c;
}

td.cursor {
    outline: 1px solid #217346;
    outline-offset: -1px;
    background: #d9e1f2;
}

.tip {
    position: absolute;
    left: 435px;
    top: 251px;
    box-sizing: border-box;
    width: 92px;
    padding: 0 1px 1px;
    background: #fff;
    border: 1px solid #c5c5c5;
    box-shadow: 1px 1px 2px rgba(0, 0, 0, 0.3);
    color: #666;
    line-height: 11px;
    white-space: nowrap;
}

.vscroll {
    display: flex;
    flex-direction: column;
    width: 14px;
    align-items: center;
    padding-top: 5px;
    box-sizing: border-box;
}

.vscroll button, .hscroll button {
    width: 10px;
    height: 10px;
    background: #fff;
    border: 1px solid #bbb;
    box-sizing: border-box;
}

.vscroll .thumb {
    flex: 1;
    width: 9px;
    background: #fff;
    border: 1px solid #bbb;
    margin-bottom: 14px;
    box-sizing: border-box;
}

/* Sheet tabs */
.sheets {
    display: flex;
    align-items: center;
    height: 18px;
    border-top: 1px solid #a5a5a5;
    box-sizing: border-box;
    padding-right: 15px;
    font-size: 9px;
}

.sheets a {
    height: 16px;
    line-height: 15px;
    padding: 0 8px;
    border-left: 1px solid #ababab;
    box-sizing: border-box;
    white-space: nowrap;
    color: #444;
}

.arrows {
    display: flex;
    justify-content: space-around;
    width: 68px;
    padding: 0 20px 0 10px;
    box-sizing: border-box;
    color: #bbb;
}

.arrows .next {
    color: #217346;
}

.sheets .current {
    background: #fff;
    color: #217346;
    font-weight: 700;
    border-bottom: 2px solid #217346;
    padding: 0 5px 0 6px;
}

.sheets .green {
    background: #ccffcc;
    color: #222;
    padding: 0 7px;
}

.sheets .orange {
    background: #f8cbad;
    color: #222;
    padding: 0 7px;
}

.more {
    width: 20px;
    text-align: center;
}

.add {
    width: 16px;
}

.hscroll {
    flex: 1;
    display: flex;
}

.hscroll .thumb {
    flex: 1;
    background: #fff;
    border: 1px solid #ccc;
    box-sizing: border-box;
    margin-right: 10px;
}

/* Status bar */
.status {
    display: flex;
    justify-content: flex-end;
    align-items: center;
    height: 15px;
    background: #f3f3f3;
    border-top: 1px solid #d0d0d0;
    box-sizing: border-box;
    padding-right: 5px;
}

.status button {
    width: 27px;
    height: 14px;
}

.status .on {
    background: #c6c6c6;
}

.status span {
    width: 12px;
    text-align: center;
    font-size: 10px;
}

.status .zoom {
    width: 24px;
    font-size: 8px;
    text-align: right;
}

input[type="range"] {
    width: 68px;
    height: 9px;
    background: linear-gradient(#999, #999) center / 100% 1px no-repeat;
}

input[type="range"]::-webkit-slider-thumb {
    appearance: none;
    width: 3px;
    height: 8px;
    background: #555;
}

/* Windows taskbar */
.taskbar {
    display: flex;
    height: 27px;
    justify-content: space-between;
    background: linear-gradient(90deg, #1b1b1b 25%, #33271f 45%, #33271f 64%, #1b1b1b 78%);
    color: #fff;
}

.apps {
    display: flex;
    flex: 0 0 66.4%;
}

.apps a {
    flex: 1;
    display: flex;
    align-items: center;
    justify-content: center;
    box-sizing: border-box;
    border-bottom: 2px solid transparent;
}

.apps svg {
    width: 18px;
    height: 18px;
}

.apps .run {
    border-bottom-color: #76b9ed;
}

.apps .now {
    background: #4a4a4a;
}

.apps text {
    font-size: 8px;
    font-weight: 700;
    fill: #fff;
}

.apps .tiny {
    font-size: 4px;
    fill: #10333a;
}

.apps .s {
    font-size: 11px;
}

.xl { color: #21a366; }
.ac { color: #c3313f; }
.wd { color: #2b7cd3; }
.pb { color: #16a39a; }
.pp { color: #ed6c47; }

.tray {
    display: flex;
    align-items: center;
    padding-right: 11px;
    gap: 3px;
}

.tray .cloud {
    width: 18px;
}

.weather {
    font-size: 10px;
    margin-right: 11px;
}

.tray time {
    text-align: center;
    width: 48px;
    margin-right: 4px;
}

.tray .bell {
    width: 18px;
    height: 18px;
}
```

FILE: script.js
```js
// Column letters, widths and fill; "bare" columns have no line on their right
const columns = [
    ["A", 40, "", ""], ["B", 36, "", ""], ["C", 14, "", ""], ["D", 40, "mint", "freeze"],
    ["E", 38, "yellow", "bare"], ["F", 27, "yellow", ""], ["M", 39, "yellow", ""], ["N", 31, "yellow", "bare"],
    ["O", 39, "gray", ""], ["P", 24, "gray", ""], ["W", 40, "gray", "bare"], ["X", 28, "gray", "bare"],
    ["Y", 39, "peach", ""], ["Z", 31, "peach", ""], ["AG", 43, "peach", ""], ["AH", 31, "peach", ""],
    ["AI", 28, "", ""], ["AJ", 43, "", "bare"],
    ["AK", 36, "peach", "bare"], ["AL", 18, "peach", ""], ["AM", 20, "peach", "bare"], ["AN", 17, "", ""],
    ["AO", 44, "mint", "bare"], ["AP", 18, "mint", "bare"], ["AQ", 17, "mint", "bare"], ["AR", 18, "", ""],
    ["AS", 43, "cream", "bare"], ["AT", 19, "cream", ""], ["AU", 20, "cream", ""],
    ["AV", 44, "", ""], ["AW", 43, "", ""], ["AX", 44, "", ""], ["AY", 43, "", ""], ["AZ", 43, "", ""],
    ["BA", 43, "", ""], ["BB", 43, "", ""], ["BC", 44, "", ""], ["BD", 41, "", "bare"]
];

const titles = {
    D: "Quotazione", E: "Media Anno", F: "Potenziale da media anno", M: "Media storico",
    N: "Potenziale da mediastorico", O: "Max Anno", P: "Media di potenziale su max", W: "Max storico",
    X: "Potenziale da max storico", Y: "Min Anno", Z: "Differenza da min anno", AG: "Min storico",
    AH: "differenza da min storico", AK: "Media e Min", AO: "Media Tutto", AS: "Media"
};

// A "!" in front of a value prints it in red
const rates = [
    "EUR|EUR/GBP|5|0,8559|0,8671|1,31%|0,8614|0,65%|0,8978|4,90%|0,9292|8,56%|0,8493|!-0,77%|0,82010|!-4,17%|||0,853|-|!0%||0,865|1|1%||0,859|1|0%",
    "|EUR/JPY|4|161,8500|153,9862|!4,85%|140,7092|!13,06%|164,3000|1,51%|164,3000|1,51%|139,0900|!14,06%|114,43000|!29,30%|||148,805||!9%||154,315||!5%||151,560||!7%",
    "|EUR/USD|5|1,0777|1,0823|0,42%|1,1021|2,27%|1,1276|4,63%|1,2350|14,60%|1,0448|!-3,05%|0,95380|!-11,50%|||1,060|-|!-2%||1,085|1|1%||1,073|-|!0%",
    "GBP|GBP/JPY|3|189,1000|177,6855|!-6,04%|163,3700|!-13,61%|190,0100|0,48%|190,0100|0,48%|156,3400|!-17,32%|129,29000|!-31,63%|||171,790|-|!-10%||178,565|-|!-6%||175,178|-|!-8%",
    "|GBP/USD|5|1,2591|1,2484|!-0,85%|1,2799|1,65%|1,3146|4,41%|1,4247|13,15%|1,1805|!-6,24%|1,05400|!-16,29%|||1,221|-|!-3%||1,253|-|!0%||1,237|-|!-2%",
    "PAC|AUD/USD|5|0,6538|0,6612|1,13%|0,6981|6,77%|0,7158|9,48%|0,8008|22,48%|0,6|||!-5,63%|||0,648|-|!-1%||0,669|1|2%||0,658|1|1%",
    "|NZD/USD|5|0,6145|0,6120|!0,40%|0,6475|5,37%|0,6538|6,40%|0,7465|21,50%|0,5|||!10,30%|||0,598||!3%||0,619|1|1%||0,608||!1%",
    "USD|USD/CAD|5|1,3491|1,3495|0,03%|1,3067|!-3,14%|1,3900|3,03%|1,4265|5,74%|1,3|||!-11,01%|||1,317|-|!-2%||1,342|-|!-1%||1,330|-|!-1%",
    "|USD/CHF|5|0,8828|0,8922|1,07%|0,9215|4,38%|0,9442|6,96%|1,0150|14,98%|0,8|||!-5,61%|||0,861|-|!-3%||0,885|1|0%||0,873|-|!-1%",
    "|USD/JPY|3|150,1800|142,3031|!-5,24%|128,2563|!-14,60%|151,9500|1,18%|151,9500|1,18%|128,0900|!-14,71%|102,58000|!-31,70%|||136,432|-|!-10%||142,069|-|!-6%||139,250|-|!-8%"
];

const filterButton = '<button aria-label="Filtro"><i class="caret"></i></button>';

function buildRow(number, rowClass, cell) {
    const picked = number === 4 ? ' class="picked"' : "";
    const cells = columns.map((column, i) => {
        const [html, extra] = cell(column, i);
        return `<td class="${column[3]} ${extra}">${html}</td>`;
    });
    return `<tr class="${rowClass}"><th${picked}>${number}</th>${cells.join("")}</tr>`;
}

function buildHead() {
    const cols = columns.map(c => `<col style="width: ${c[1]}px">`).join("");
    const outline = columns.map(c => {
        const plus = ["M", "W", "AG"].includes(c[0]) ? "<button>+</button>" : "";
        return `<th class="${c[3]}">${plus}</th>`;
    }).join("");
    const letters = columns.map(c => `<th class="${c[3]} ${c[0] === "A" ? "picked" : ""}">${c[0]}</th>`).join("");
    return `<colgroup><col style="width: 17px">${cols}</colgroup>
        <thead>
            <tr class="outline"><th class="levels"><button>1</button><button>2</button></th>${outline}</tr>
            <tr class="letters"><th></th>${letters}</tr>
        </thead>`;
}

function buildTop() {
    const filters = (label) => (c, i) => {
        if (i === 0) return [label, "lilac filter"];
        if (i === 1) return [`<div>(Tutto)${filterButton}</div>`, "lilac filter"];
        return ["", ""];
    };
    return buildRow(1, "", filters("annomese"))
        + buildRow(2, "plain", filters("data"))
        + buildRow(3, "plain", () => ["", ""])
        + buildRow(4, "title", (c, i) => {
            if (i === 0) return ["", "cursor"];
            return [i === 3 ? "Valori" : "", i < 16 ? "lilac" : ""];
        })
        + buildRow(5, "names", (c, i) => {
            if (i < 3) return [`<span>${["'", "uta", "azione"][i]}</span>${filterButton}`, "lilac pivot"];
            return [titles[c[0]] ? `<span>${titles[c[0]]}</span>` : "", c[2]];
        });
}

function buildRate(line, index) {
    const values = line.split("|");
    return buildRow(index + 6, "rate", (c, i) => {
        let value = values[i] || "";
        let extra = c[2];
        if (i < 2) extra += " text";
        if (i === 0) extra += [2, 4, 6, 9].includes(index) ? " group-end" : " group-name";
        if (["D", "E", "M", "O", "W", "Y", "AG", "AK", "AO", "AS"].includes(c[0])) extra += " price";
        if (c[0] === "Y" && value.length === 3) extra += " partial";
        if (c[0] === "D" || i > 17) extra += " thin";
        if (value === "-") extra += " dash";
        if (value[0] === "!") {
            extra += " red";
            value = value.slice(1);
        }
        return [value, extra];
    });
}

let body = buildTop() + rates.map(buildRate).join("");
for (let n = 16; n <= 37; n++) {
    body += buildRow(n, "empty", () => ["", ""]);
}

document.getElementById("grid-table").innerHTML = buildHead() + `<tbody>${body}</tbody>`;
```
